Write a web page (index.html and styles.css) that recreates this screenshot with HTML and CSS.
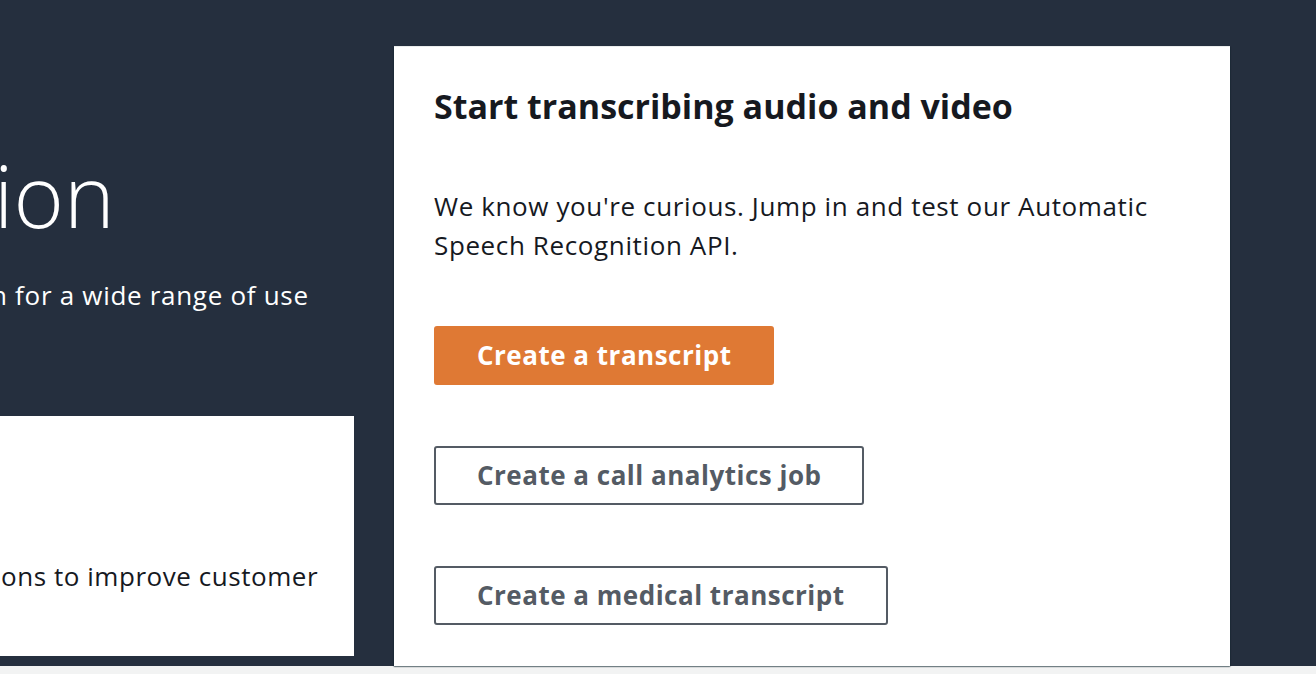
FILE: index.html
```html
<!DOCTYPE html>
<html lang="en">
<head>
<meta charset="utf-8">
<title>Amazon Transcribe</title>
<link rel="stylesheet" href="styles.css">
</head>
<body>
<div class="page">
  <section class="hero">
    <div class="hero-title">ion</div>
    <div class="hero-sub"><span class="clip-n">n</span> for a wide range of use</div>
    <div class="info-box">
      <p class="info-text">ons to improve customer</p>
    </div>
  </section>
  <section class="card">
    <h2 class="card-title">Start transcribing audio and video</h2>
    <p class="card-text">We know you're curious. Jump in and test our Automatic Speech Recognition API.</p>
    <div class="actions">
      <button class="btn btn-primary">Create a transcript</button>
      <button class="btn btn-normal">Create a call analytics job</button>
      <button class="btn btn-normal">Create a medical transcript</button>
    </div>
  </section>
</div>
<div class="below"></div>
</body>
</html>
```
FILE: styles.css
```css
html, body {
  margin: 0;
  padding: 0;
}
body {
  background: #f2f3f3;
  font-family: "Open Sans", "Noto Sans", sans-serif;
  overflow: hidden;
  width: 1316px;
  height: 674px;
}
.page {
  display: flex;
  align-items: flex-start;
  height: 666px;
  background: #252f3e;
}
.hero {
  width: 354px;
  flex: none;
  display: flex;
  flex-direction: column;
  height: 656px;
  overflow: hidden;
}
.hero-title {
  margin-top: 152px;
  margin-left: -6px;
  font-size: 86px;
  font-weight: 300;
  line-height: 86px;
  color: #ffffff;
  white-space: nowrap;
}
.hero-sub {
  margin-top: 38px;
  margin-left: -9px;
  font-size: 26px;
  letter-spacing: 0.7px;
  line-height: 38.5px;
  color: #ffffff;
  white-space: nowrap;
}
.info-box {
  margin-top: auto;
  height: 240px;
  background: #ffffff;
  box-sizing: border-box;
  padding-top: 141px;
}
.info-text {
  margin: 0;
  padding-left: 1px;
  font-size: 26px;
  letter-spacing: 0.55px;
  line-height: 38.5px;
  color: #16191f;
  white-space: nowrap;
}
.card {
  flex: none;
  margin-left: 40px;
  margin-top: 46px;
  width: 836px;
  height: 620px;
  box-sizing: border-box;
  background: #ffffff;
  border-top: 1px solid #eaeded;
  box-shadow: 0 1px 1px 0 rgba(0, 28, 36, 0.35), 1px 1px 1px 0 rgba(0, 28, 36, 0.15), -1px 1px 1px 0 rgba(0, 28, 36, 0.15);
  padding: 38px 40px 0;
  display: flex;
  flex-direction: column;
}
.card-title {
  margin: 0;
  font-size: 34px;
  font-weight: 700;
  line-height: 42px;
  color: #16191f;
}
.card-text {
  margin: 60px 0 0;
  font-size: 26px;
  letter-spacing: 0.62px;
  line-height: 38.5px;
  color: #16191f;
}
.actions {
  margin-top: 62px;
  display: flex;
  flex-direction: column;
  align-items: flex-start;
  gap: 61px;
}
.btn {
  height: 59px;
  box-sizing: border-box;
  padding: 0 41px;
  border-radius: 3px;
  border: 2px solid #545b64;
  background: #ffffff;
  color: #545b64;
  font-family: "Open Sans", "Noto Sans", sans-serif;
  font-size: 26px;
  font-weight: 700;
  letter-spacing: 0.5px;
  line-height: 55px;
  white-space: nowrap;
  cursor: pointer;
}
.btn-primary {
  background: #df7934;
  border-color: #df7934;
  color: #ffffff;
}
```
